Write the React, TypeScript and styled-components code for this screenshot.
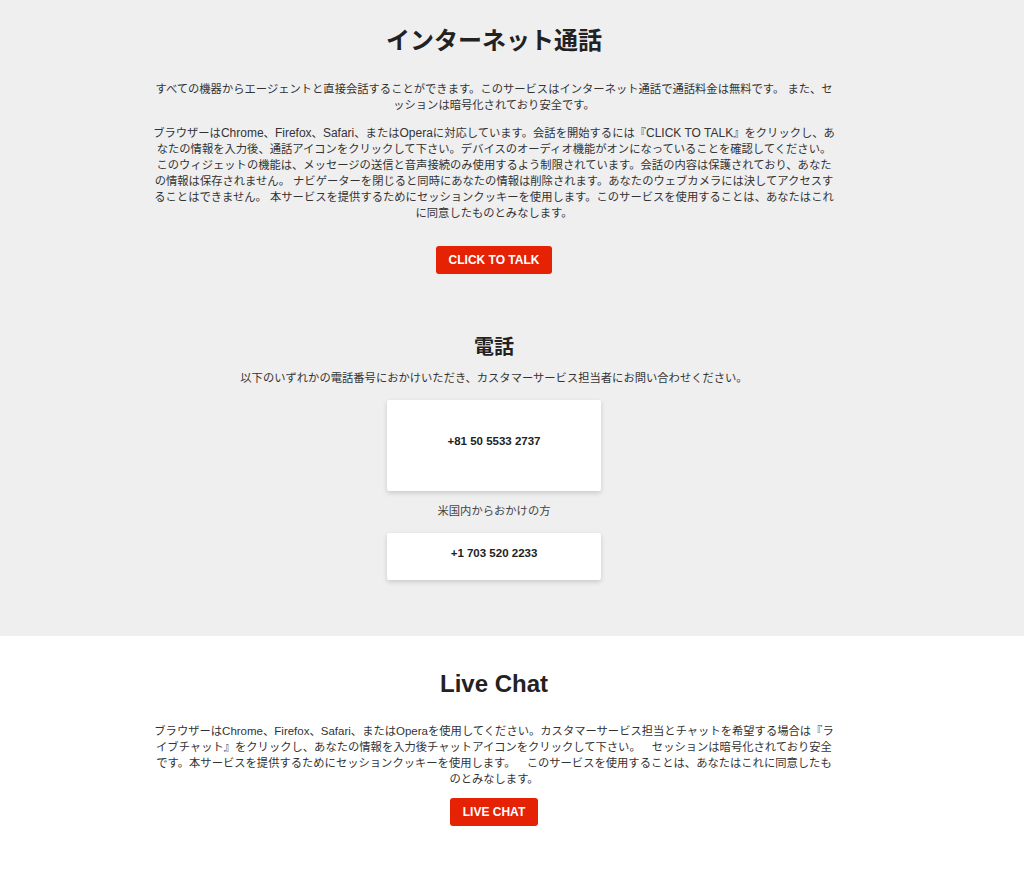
import styled, { createGlobalStyle } from 'styled-components';

const GlobalStyle = createGlobalStyle`
  html, body {
    margin: 0;
    padding: 0;
    background: #ffffff;
    font-family: "Liberation Sans", Arial, "Noto Sans CJK JP", sans-serif;
    color: #333333;
  }
`;

const Section = styled.section<{ $gray?: boolean }>`
  background: ${(p) => (p.$gray ? '#efefef' : '#ffffff')};
  padding: ${(p) => (p.$gray ? '26px 36px 56px 0' : '33px 36px 40px 0')};
`;

const Inner = styled.div`
  max-width: 684px;
  margin: 0 auto;
  display: flex;
  flex-direction: column;
  align-items: center;
  text-align: center;
`;

const Title = styled.h2<{ $small?: boolean }>`
  margin: 0;
  font-size: ${(p) => (p.$small ? '20px' : '24px')};
  line-height: ${(p) => (p.$small ? '26px' : '30px')};
  font-weight: 700;
  color: #222222;
`;

const Text = styled.p<{ $top: number; $spaced?: boolean }>`
  margin: ${(p) => p.$top}px 0 0;
  font-size: 11.3px;
  line-height: 16px;
  word-spacing: ${(p) => (p.$spaced ? '8px' : 'normal')};
  color: #333333;
`;

// latin words sit a touch larger than the kana around them
const Latin = styled.span<{ $size?: number }>`
  font-size: ${(p) => p.$size ?? 12}px;
  word-spacing: normal;
`;

const RedButton = styled.button<{ $top: number }>`
  margin-top: ${(p) => p.$top}px;
  height: 28px;
  padding: 0 13px;
  border: none;
  border-radius: 3px;
  background: #e62205;
  color: #ffffff;
  font-family: "Liberation Sans", Arial, sans-serif;
  font-size: 12px;
  font-weight: 700;
  cursor: pointer;
`;

const PhoneCard = styled.div<{ $tall?: boolean }>`
  width: 214px;
  height: ${(p) => (p.$tall ? '91px' : '47px')};
  box-sizing: border-box;
  padding-bottom: ${(p) => (p.$tall ? '9px' : '7px')};
  background: #ffffff;
  border-radius: 2px;
  box-shadow: 0 2px 5px rgba(0, 0, 0, 0.16);
  display: flex;
  align-items: center;
  justify-content: center;
  font-size: 11.5px;
  font-weight: 700;
  color: #222222;
`;

const Phones = styled.div`
  margin-top: 14px;
  display: flex;
  flex-direction: column;
  align-items: center;
  gap: 12px;
`;

const Label = styled.div`
  font-size: 11.3px;
  line-height: 16px;
  color: #444444;
  margin-bottom: 2px;
`;

export default function App() {
  return (
    <>
      <GlobalStyle />
      <Section $gray>
        <Inner>
          <Title>インターネット通話</Title>
          <Text $top={25}>
            すべての機器からエージェントと直接会話することができます。このサービスはインターネット通話で通話料金は無料です。 また、セッションは暗号化されており安全です。
          </Text>
          <Text $top={12}>
            ブラウザーは<Latin>Chrome</Latin>、<Latin>Firefox</Latin>、<Latin>Safari</Latin>、または<Latin>Opera</Latin>に対応しています。会話を開始するには『<Latin>CLICK TO TALK</Latin>』をクリックし、あなたの情報を入力後、通話アイコンをクリックして下さい。デバイスのオーディオ機能がオンになっていることを確認してください。このウィジェットの機能は、メッセージの送信と音声接続のみ使用するよう制限されています。会話の内容は保護されており、あなたの情報は保存されません。 ナビゲーターを閉じると同時にあなたの情報は削除されます。あなたのウェブカメラには決してアクセスすることはできません。 本サービスを提供するためにセッションクッキーを使用します。このサービスを使用することは、あなたはこれに同意したものとみなします。
          </Text>
          <RedButton $top={25}>CLICK TO TALK</RedButton>

          <Title $small style={{ marginTop: 60 }}>電話</Title>
          <Text $top={10}>
            以下のいずれかの電話番号におかけいただき、カスタマーサービス担当者にお問い合わせください。
          </Text>
          <Phones>
            <PhoneCard $tall>+81 50 5533 2737</PhoneCard>
            <Label>米国内からおかけの方</Label>
            <PhoneCard>+1 703 520 2233</PhoneCard>
          </Phones>
        </Inner>
      </Section>
      <Section>
        <Inner>
          <Title>Live Chat</Title>
          <Text $top={24} $spaced>
            ブラウザーは<Latin $size={11.5}>Chrome</Latin>、<Latin $size={11.5}>Firefox</Latin>、<Latin $size={11.5}>Safari</Latin>、または<Latin $size={11.5}>Opera</Latin>を使用してください。カスタマーサービス担当とチャットを希望する場合は『ライブチャット』をクリックし、あなたの情報を入力後チャットアイコンをクリックして下さい。 セッションは暗号化されており安全です。本サービスを提供するためにセッションクッキーを使用します。 このサービスを使用することは、あなたはこれに同意したものとみなします。
          </Text>
          <RedButton $top={11}>LIVE CHAT</RedButton>
        </Inner>
      </Section>
    </>
  );
}
